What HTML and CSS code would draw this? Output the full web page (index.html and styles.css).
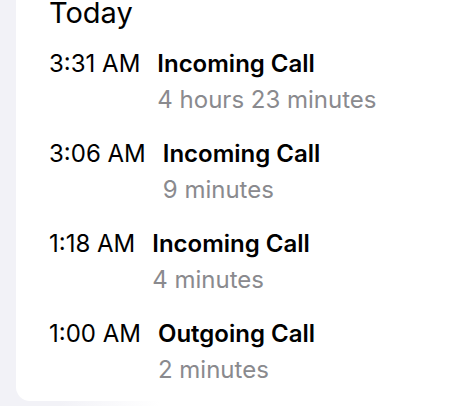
FILE: index.html
```html
<!DOCTYPE html>
<html>
  <head>
    <meta charset="UTF-8" />
    <meta name="viewport" content="width=device-width, initial-scale=1.0" />
    <title>Recents</title>
    <link rel="stylesheet" href="styles.css">
  </head>
  <body>
    <div class="card">
      <h2 class="day">Today</h2>
      <ul class="calls">
        <li class="call">
          <span class="time">3:31 AM</span>
          <div class="info">
            <div class="kind">Incoming Call</div>
            <div class="duration">4 hours 23 minutes</div>
          </div>
        </li>
        <li class="call">
          <span class="time">3:06 AM</span>
          <div class="info">
            <div class="kind">Incoming Call</div>
            <div class="duration">9 minutes</div>
          </div>
        </li>
        <li class="call">
          <span class="time">1:18 AM</span>
          <div class="info">
            <div class="kind">Incoming Call</div>
            <div class="duration">4 minutes</div>
          </div>
        </li>
        <li class="call">
          <span class="time">1:00 AM</span>
          <div class="info">
            <div class="kind">Outgoing Call</div>
            <div class="duration">2 minutes</div>
          </div>
        </li>
      </ul>
    </div>
  </body>
</html>
```

FILE: styles.css
```css
body {
  margin: 0;
  height: 406px;
  overflow: hidden;
  background: linear-gradient(to right, #f2f2f7 0, #f2f2f7 60px, #ffffff 160px);
  font-family: Inter, "Noto Sans", sans-serif;
  color: #000;
}
.card {
  margin-left: 16px;
  height: 401px;
  padding-left: 33px;
  background: #fff;
  border-bottom-left-radius: 14px;
  box-sizing: border-box;
}
.day {
  margin: 0;
  font-size: 29px;
  font-weight: 400;
  line-height: 26px;
}
.calls {
  list-style: none;
  margin: 23px 0 0;
  padding: 0;
}
.call {
  display: flex;
  gap: 17px;
  margin-bottom: 24px;
}
.time {
  font-size: 24px;
  line-height: 30px;
}
.kind {
  font-size: 24px;
  font-weight: 600;
  line-height: 30px;
}
.duration {
  margin-top: 6px;
  font-size: 24px;
  line-height: 30px;
  color: #8a8a8e;
}
```
